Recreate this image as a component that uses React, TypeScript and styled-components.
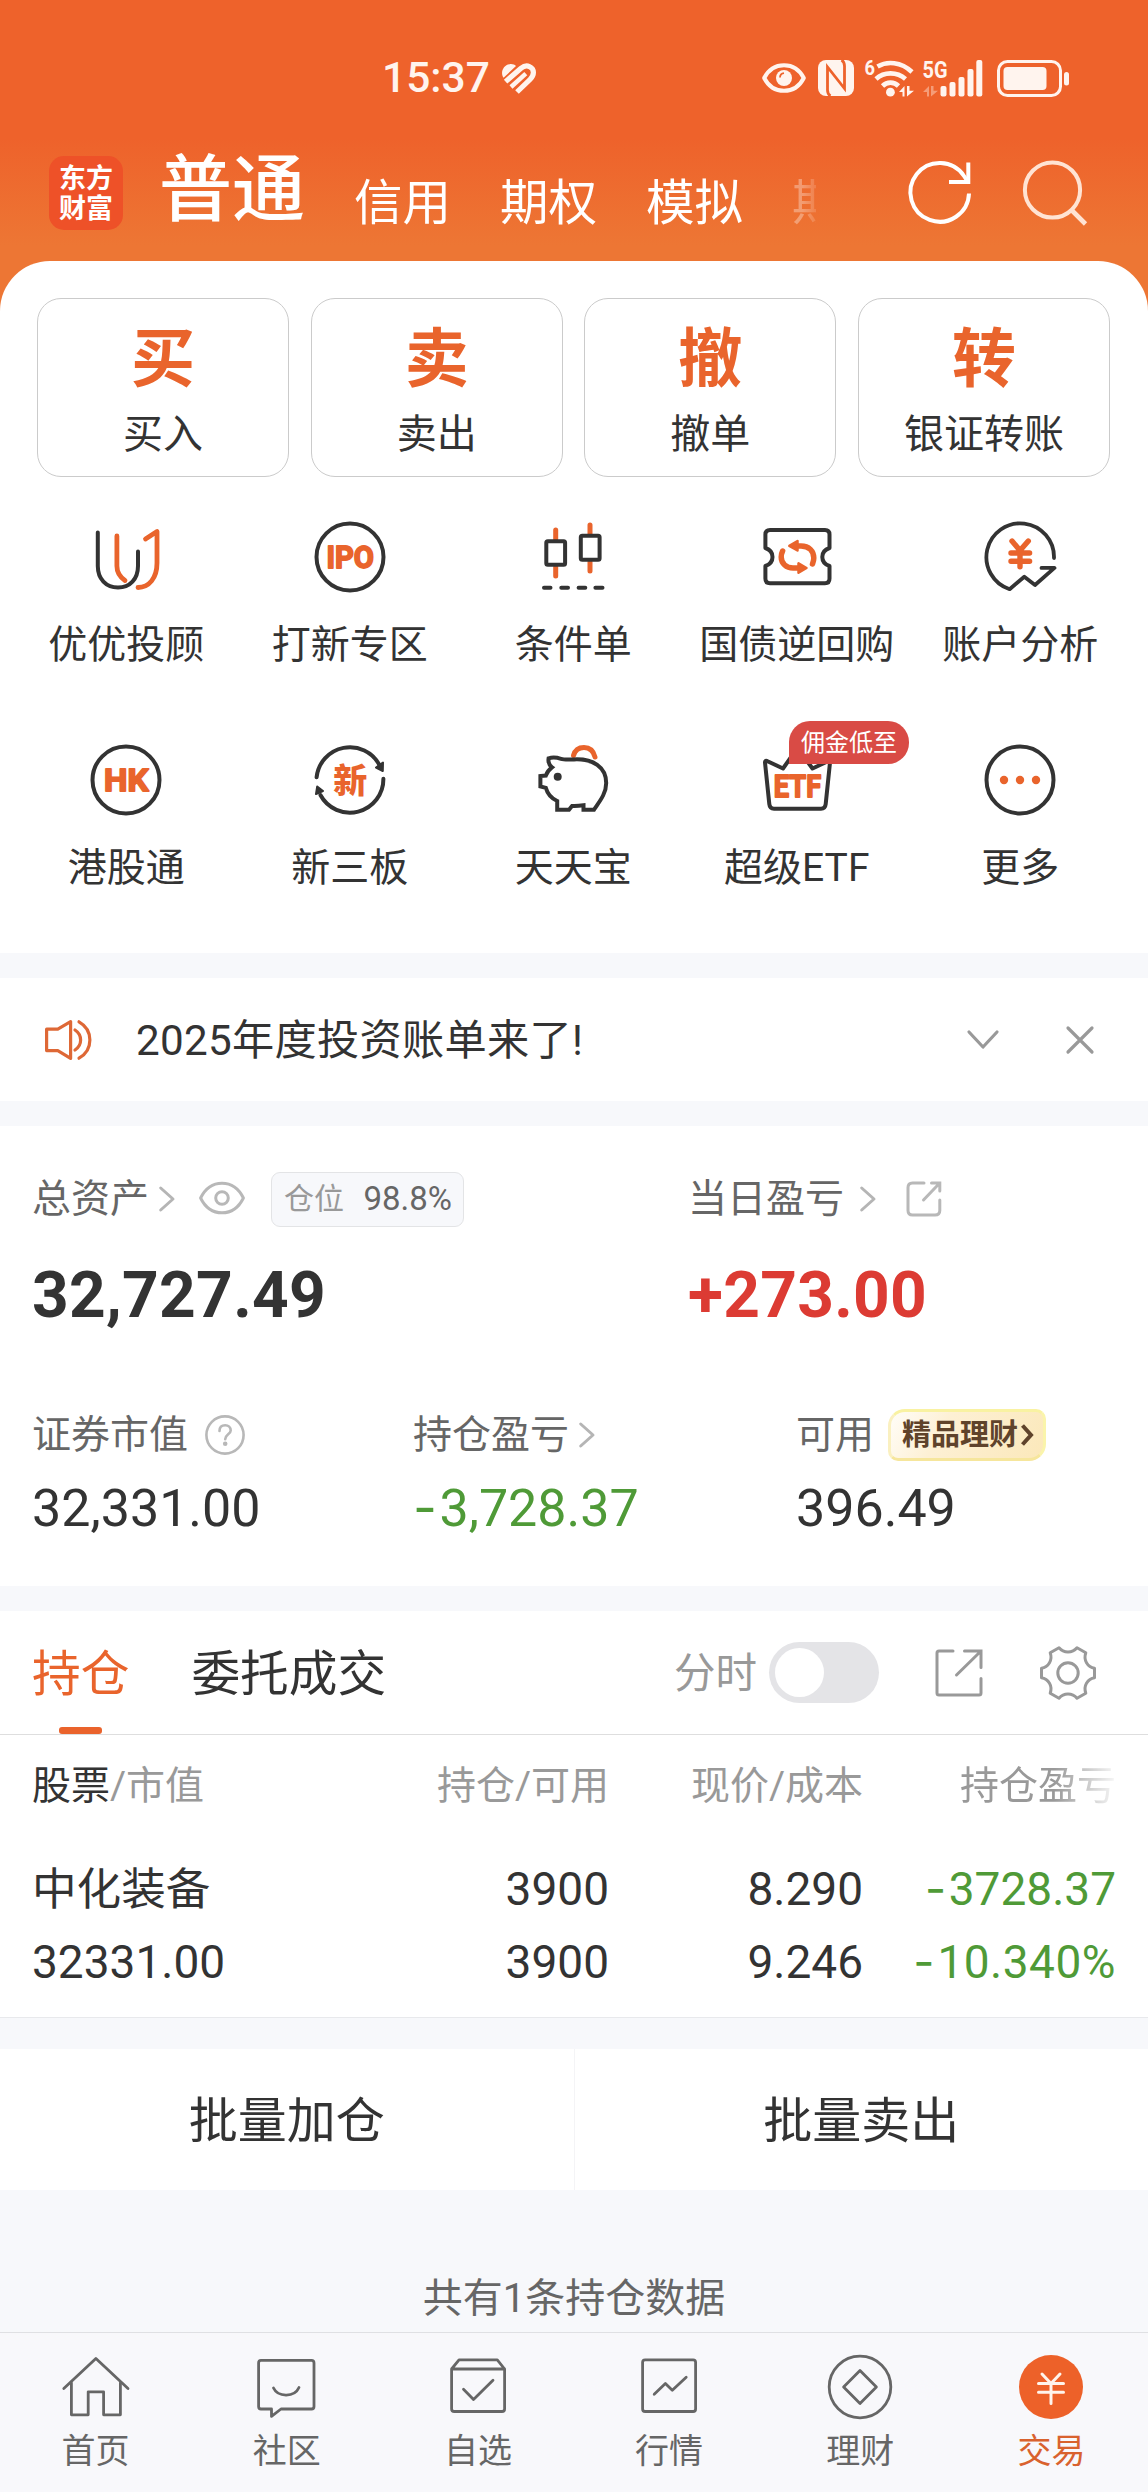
import React from 'react';
import styled, { createGlobalStyle, css } from 'styled-components';

const ORANGE = '#e9642c';
const INK = '#333333';
const GREY = '#666666';
const LIGHT = '#999999';
const GREEN = '#4f9a37';
const RED = '#dc3b33';

const GlobalStyle = createGlobalStyle`
  * { box-sizing: border-box; }
  body {
    margin: 0;
    background: #f7f8fb;
    color: ${INK};
    font-family: Roboto, "Noto Sans CJK SC", sans-serif;
    white-space: nowrap;
  }
  svg { display: block; flex: none; overflow: visible; }
  svg text { font-family: Roboto, "Noto Sans CJK SC", sans-serif; }
`;

const Page = styled.div`
  width: 1148px;
  height: 2492px;
  overflow: hidden;
  display: flex;
  flex-direction: column;
  background: #f7f8fb;
`;

const Top = styled.div`
  background: linear-gradient(180deg, #ee622b 0, #ee622b 138px, #ed7634 245px, #ed7634 100%);
`;

/* ---------- status bar ---------- */

const StatusBar = styled.div`
  height: 156px;
  display: flex;
  align-items: center;
  padding: 0 79px 0 382px;
  color: #fff4ee;
`;

const Clock = styled.span`
  font-size: 42.5px;
  font-weight: 500;
  line-height: 50px;
  width: 119px;
`;

const StatusIcons = styled.div`
  margin-left: auto;
  display: flex;
  align-items: center;
`;

const StatusIcon = styled.span<{ $gap: number }>`
  margin-left: ${p => p.$gap}px;
`;

/* ---------- header ---------- */

const Header = styled.div`
  height: 105px;
  display: flex;
  align-items: flex-start;
  padding-left: 49px;
`;

const HeaderInner = styled.div`
  height: 73px;
  flex: 1;
  display: flex;
  align-items: center;
`;

const Logo = styled.div`
  width: 74px;
  height: 74px;
  border-radius: 15px;
  background: #ee5128;
  color: #fff;
  font-size: 27px;
  font-weight: 700;
  line-height: 30px;
  text-align: center;
  padding-top: 8px;
`;

const Tabs = styled.div`
  display: flex;
  align-items: center;
  margin-left: 36px;
`;

const MainTab = styled.span`
  font-size: 73px;
  line-height: 76px;
  padding-bottom: 6px;
  font-weight: 500;
  color: #fff;
`;

const SubTab = styled.span<{ $faded?: boolean }>`
  font-size: 48.5px;
  line-height: 60px;
  color: #fff;
  padding-top: 22px;
  margin-left: 49px;
  ${p => p.$faded && css`
    margin-right: -24px;
    opacity: .32;
    mask-image: linear-gradient(90deg, #000 10px, rgba(0, 0, 0, .4) 24px, transparent 24px);
  `}
`;

const HeaderAction = styled.div<{ $left: number }>`
  margin-left: ${p => p.$left}px;
`;

/* ---------- sheet ---------- */

const Sheet = styled.div`
  background: #fff;
  border-radius: 50px 50px 0 0;
  padding: 37px 37px 60px;
`;

const Cards = styled.div`
  display: grid;
  grid-template-columns: repeat(4, 1fr);
  gap: 21.6px;
  padding-right: 1px;
`;

const Card = styled.div`
  height: 179px;
  border: 1px solid #cbcbcb;
  border-radius: 24px;
  display: flex;
  flex-direction: column;
  align-items: center;
  padding-top: 26px;
`;

const CardGlyph = styled.span`
  font-size: 64px;
  line-height: 70px;
  font-weight: 700;
  color: ${ORANGE};
`;

const CardLabel = styled.span`
  font-size: 40px;
  line-height: 50px;
  margin-top: 15px;
`;

const Tools = styled.div`
  display: grid;
  grid-template-columns: repeat(5, 1fr);
  row-gap: 70px;
  margin: 40px -21px 0 -22.5px;
`;

const Tool = styled.div`
  position: relative;
  display: flex;
  flex-direction: column;
  align-items: center;
`;

const ToolLabel = styled.span`
  font-size: 39px;
  line-height: 50px;
  margin-top: 23px;
`;

const Ribbon = styled.span`
  position: absolute;
  left: 104px;
  top: -19px;
  width: 120px;
  height: 43px;
  border-radius: 21px 21px 21px 0;
  background: #d94b45;
  color: #fff;
  font-size: 24px;
  line-height: 45px;
  text-align: center;
`;

/* ---------- notice ---------- */

const Notice = styled.div`
  height: 123px;
  margin-top: 25px;
  background: #fff;
  display: flex;
  align-items: center;
  padding: 0 53px 0 43px;
`;

const NoticeText = styled.span`
  flex: 1;
  margin-left: 40px;
  padding-top: 3px;
  font-size: 42.2px;
  letter-spacing: .3px;
  line-height: 60px;
`;

const NoticeActions = styled.div`
  display: flex;
  align-items: center;
  gap: 64px;
`;

/* ---------- assets ---------- */

const Assets = styled.div`
  height: 460px;
  margin-top: 25px;
  background: #fff;
  padding: 45px 31px 0 32px;
`;

const TwoCols = styled.div`
  display: grid;
  grid-template-columns: 656px 1fr;
`;

const ThreeCols = styled.div`
  display: grid;
  grid-template-columns: 381px 383px 1fr;
  margin-top: 79px;
`;

const Caption = styled.div`
  height: 56px;
  display: flex;
  align-items: center;
  color: ${GREY};
  font-size: 39px;
  line-height: 56px;
`;

const Spaced = styled.span<{ $left: number }>`
  margin-left: ${p => p.$left}px;
`;

const BigNumber = styled.div<{ $color?: string }>`
  margin-top: 37px;
  font-size: 64px;
  line-height: 64px;
  font-weight: 700;
  letter-spacing: .3px;
  color: ${p => p.$color ?? INK};
`;

const Figure = styled.div<{ $color?: string }>`
  margin-top: 16px;
  font-size: 52px;
  line-height: 60px;
  color: ${p => p.$color ?? INK};
`;

const Dash = styled.span`
  font-family: Inter, Roboto, sans-serif;
  line-height: 1;
  margin-right: 2.5px;
`;

const Ratio = styled.span`
  margin-left: 26px;
  width: 193px;
  height: 55px;
  border: 1px solid #e3e4e6;
  border-radius: 9px;
  background: #f7f8fb;
  display: flex;
  align-items: center;
  justify-content: space-between;
  padding: 0 11px 0 12px;
  font-size: 30px;
  line-height: 50px;
  color: ${LIGHT};
`;

const RatioValue = styled.span`
  font-size: 33px;
  color: ${GREY};
`;

const GoldTag = styled.span`
  margin-left: 14px;
  width: 158px;
  height: 52px;
  border: 3px solid;
  border-color: #f9f2a2 #faf4ab #f6e69c #faf0c0;
  border-radius: 17px 10px 17px 10px;
  background: linear-gradient(120deg, #fffdf8 0, #fdf0d4 35%, #fbe8ba 100%);
  display: flex;
  align-items: center;
  padding: 0 0 0 11px;
  gap: 3px;
  font-size: 29px;
  font-weight: 700;
  line-height: 46px;
  color: #5f432b;
`;

/* ---------- holdings ---------- */

const Holdings = styled.div`
  margin-top: 25px;
  height: 407px;
  background: #fff;
  border-bottom: 1px solid #e8e9ec;
`;

const HoldingTabs = styled.div`
  height: 124px;
  border-bottom: 1px solid #dedede;
  display: flex;
  align-items: stretch;
  padding: 0 52px 0 32px;
`;

const HoldingTab = styled.span<{ $active?: boolean }>`
  position: relative;
  font-size: 48.7px;
  line-height: 127px;
  margin-right: 62px;
  color: ${p => (p.$active ? ORANGE : INK)};
  ${p => p.$active && css`
    &::after {
      content: '';
      position: absolute;
      left: 27px;
      bottom: 0;
      width: 43px;
      height: 7px;
      border-radius: 3px;
      background: #ea632c;
    }
  `}
`;

const HoldingTools = styled.div`
  margin-left: auto;
  display: flex;
  align-items: center;
  color: ${LIGHT};
`;

const SwitchLabel = styled.span`
  font-size: 41.5px;
  line-height: 60px;
  padding-top: 3px;
`;

const Switch = styled.span`
  width: 110px;
  height: 61px;
  margin: 0 56px 0 12px;
  border-radius: 31px;
  background: #e4e4e7;
  padding: 6px;
  &::after {
    content: '';
    display: block;
    width: 49px;
    height: 49px;
    border-radius: 50%;
    background: #fff;
  }
`;

const TableRow = styled.div<{ $head?: boolean }>`
  display: grid;
  grid-template-columns: 577px 254px 253px;
  padding-left: 32px;
  font-size: ${p => (p.$head ? 39 : 46)}px;
  line-height: ${p => (p.$head ? 103 : 73)}px;
  height: ${p => (p.$head ? 103 : 73)}px;
  margin-bottom: ${p => (p.$head ? 15 : 0)}px;
  color: ${p => (p.$head ? LIGHT : INK)};
`;

const FirstCell = styled.div`
  display: flex;
  justify-content: space-between;
`;

const RightCell = styled.span<{ $color?: string; $fade?: boolean; $spacing?: number }>`
  display: block;
  text-align: right;
  letter-spacing: ${p => p.$spacing ?? 0}px;
  color: ${p => p.$color ?? 'inherit'};
  ${p => p.$fade && css`
    mask-image: linear-gradient(90deg, #000 0, #000 calc(100% - 62px), rgba(0, 0, 0, .08) 100%);
  `}
`;

const Strong = styled.b`
  font-weight: 400;
  color: ${INK};
`;

const StockName = styled.span`
  font-size: 44.6px;
  padding-top: 1px;
`;

/* ---------- actions ---------- */

const Actions = styled.div`
  height: 141px;
  margin-top: 31px;
  background: #fff;
  display: flex;
`;

const Action = styled.div`
  flex: 1;
  text-align: center;
  font-size: 49px;
  line-height: 145px;
  & + & { border-left: 1px solid #f4f4f6; }
`;

const Count = styled.div`
  height: 142px;
  padding-top: 84px;
  font-size: 40px;
  line-height: 50px;
  text-align: center;
  color: ${GREY};
`;

/* ---------- bottom navigation ---------- */

const BottomNav = styled.div`
  flex: 1;
  border-top: 1px solid #dfe0e3;
  background: #f8f8fb;
  display: grid;
  grid-template-columns: repeat(6, 1fr);
  padding: 19px 1px 0 0;
`;

const NavItem = styled.div<{ $active?: boolean }>`
  display: flex;
  flex-direction: column;
  align-items: center;
  gap: 9px;
  font-size: 34px;
  line-height: 40px;
  color: ${p => (p.$active ? '#d9622e' : GREY)};
`;

/* ---------- icons ---------- */

const ToolSvg = ({ children }: { children: React.ReactNode }) => (
  <svg width="80" height="80" viewBox="0 0 80 80" fill="none" stroke={INK} strokeWidth="4" strokeLinecap="round" strokeLinejoin="round">
    {children}
  </svg>
);

const IconText = ({ x, y, w, size, children }: { x: number; y: number; w: number; size: number; children: string }) => (
  <text x={x} y={y} textLength={w} lengthAdjust="spacingAndGlyphs" fontSize={size} fontWeight="700" fill={ORANGE} stroke={ORANGE} strokeWidth="1.8">
    {children}
  </text>
);

const icons = {
  advisor: (
    <ToolSvg>
      <path d="M11.8 15.5V49C11.8 62 20 70.5 32 70.5S52 62 52 49V34.5" />
      <g stroke={ORANGE} strokeWidth="4.8">
        <path d="M30.9 19V49C30.9 55 34 60 39 63.5" />
        <path d="M59.5 22L71 14.5V46C71 61 63 70.5 52 70.5" />
      </g>
    </ToolSvg>
  ),
  ipo: (
    <ToolSvg>
      <circle cx="40" cy="40" r="33.5" />
      <IconText x={16.5} y={51.3} w={47.5} size={32}>IPO</IconText>
    </ToolSvg>
  ),
  candles: (
    <ToolSvg>
      <g stroke={ORANGE} strokeWidth="5">
        <path d="M22.7 13V22M22.7 50V59M57 8V17M57 45V54" />
      </g>
      <rect x="13.3" y="24.3" width="18.8" height="23.4" rx="1.5" />
      <rect x="47.8" y="18.7" width="18.8" height="24" rx="1.5" />
      <path d="M11 70.7H17.5M28.3 70.7H35M45.6 70.7H52.3M62.4 70.7H69.5" />
    </ToolSvg>
  ),
  bond: (
    <ToolSvg>
      <path d="M13 13H68Q72.5 13 72.5 17.5V31C68 32.5 65.3 36 65.3 40S68 47.5 72.5 49V61.5Q72.5 66.3 68 66.3H13Q8.4 66.3 8.4 61.5V49C12.9 47.5 15.5 44 15.5 40S12.9 32.5 8.4 31V17.5Q8.4 13 13 13Z" />
      <g stroke={ORANGE} strokeWidth="5.5">
        <path d="M40 29H44C52 29 56.8 34 56.8 41C56.8 43.5 56.3 45 55.5 47" />
        <path d="M25.6 34C24.6 36 24.2 38 24.2 40C24.2 46.5 29.5 51 36 51H42" />
      </g>
      <path d="M32.3 28.8L40.5 24V33.5ZM49.5 51L41.5 46.3V55.8Z" fill={ORANGE} stroke={ORANGE} strokeWidth="2.5" />
    </ToolSvg>
  ),
  account: (
    <ToolSvg>
      <path d="M74 41A33.8 33.8 0 1 0 29.6 72.2L44.3 59.7L55 68L74.5 50.9H61.5" strokeWidth="3.8" />
      <path d="M32 24L40 33.5L48.3 24M40 34V49.7M31 36H49.6M31 44.3H49.6" stroke={ORANGE} strokeWidth="5.4" />
    </ToolSvg>
  ),
  hk: (
    <ToolSvg>
      <circle cx="40" cy="40" r="33.5" />
      <IconText x={18} y={51.3} w={44.5} size={32}>HK</IconText>
    </ToolSvg>
  ),
  neeq: (
    <ToolSvg>
      <path d="M6.6 37.3A33.5 33.5 0 0 1 69.5 25" />
      <path d="M73.4 38.8A33.5 33.5 0 0 1 10.4 55" />
      <path d="M72.8 31L66 27.5L73 22.5ZM7.2 46.5L13 51L6 54Z" fill={INK} strokeWidth="2" />
      <text x="23.3" y="52.6" fontSize="34" fontWeight="900" fill={ORANGE} stroke="none">新</text>
    </ToolSvg>
  ),
  piggy: (
    <ToolSvg>
      <path d="M40.5 15.5C42 10 46 7.5 51 7.5C57 7.5 60.5 11 62 17" stroke={ORANGE} strokeWidth="5" />
      <path d="M15.6 18.3C19 17.2 24 17.5 28 18.8C31 19.8 35 19.4 41 19.4C60 18.5 73.2 27 73.2 43C73.2 54 66 62 61 69.7H50.5V65.3C46 66 42 66.2 39 66L36 69.7H24.2V61C18.5 58.5 14.5 54 12.8 47.8L7.4 46.5V36L12.8 35.6C14 32 16 29.5 19 27.3C16 25 15 22 15.6 18.3Z" strokeLinejoin="miter" />
      <circle cx="24.7" cy="36.7" r="4" fill={INK} stroke="none" />
    </ToolSvg>
  ),
  etf: (
    <ToolSvg>
      <path d="M8 22.5L12.3 64Q12.8 68.7 17 68.7H64Q68.2 68.7 68.7 64L73 22.5Q73 20.5 71 21.3L55.5 28.5L40.5 8L26 28.5L10 21Q7.8 20.3 8 22.5Z" />
      <IconText x={16.8} y={57.3} w={47.3} size={32}>ETF</IconText>
    </ToolSvg>
  ),
  more: (
    <ToolSvg>
      <circle cx="40" cy="40" r="33.5" />
      <g fill={ORANGE} stroke="none">
        <circle cx="24" cy="40" r="4.2" />
        <circle cx="40" cy="40" r="4.2" />
        <circle cx="56" cy="40" r="4.2" />
      </g>
    </ToolSvg>
  ),
};

const NavSvg = ({ children }: { children: React.ReactNode }) => (
  <svg width="70" height="70" viewBox="0 0 70 70" fill="none" stroke={GREY} strokeWidth="2.8" strokeLinecap="round" strokeLinejoin="round">
    {children}
  </svg>
);

const navIcons = {
  home: (
    <NavSvg>
      <path d="M2.8 36.5L34.9 6.5L67 36.5" />
      <path d="M10.4 31V62.8H27.2V39.8H42.6V62.8H59.4V31" />
    </NavSvg>
  ),
  community: (
    <NavSvg>
      <path d="M9 8.4H59.5Q62 8.4 62 11V54.5Q62 57 59.5 57H29L19.5 64.3V57H9Q6.6 57 6.6 54.5V11Q6.6 8.4 9 8.4Z" />
      <path d="M21.5 36C26 45.5 42.5 45.5 47 35.5" />
    </NavSvg>
  ),
  watch: (
    <NavSvg>
      <path d="M8.6 17L16 7.8H54.3L61.6 17V57Q61.6 59.5 59 59.5H11.2Q8.6 59.5 8.6 57ZM8.6 17H61.6M20.5 37.3L30.5 47.4L50 28.2" />
    </NavSvg>
  ),
  market: (
    <NavSvg>
      <rect x="8.6" y="7.8" width="53" height="51.7" rx="2.5" />
      <path d="M20.2 42.3L31.4 31.5L38.3 38.3L52.2 25.2" />
    </NavSvg>
  ),
  wealth: (
    <NavSvg>
      <circle cx="35" cy="35" r="30.8" />
      <path d="M35 18.5L51.4 35L35 51.5L18.6 35Z" />
    </NavSvg>
  ),
  trade: (
    <NavSvg>
      <circle cx="35" cy="35" r="32" fill="#ed6129" stroke="none" />
      <path d="M26 22L35 31.5L44 22M35 31.5V51.5M22.5 31.5H47.5M22.5 40.3H47.5" stroke="#fff4ec" strokeWidth="3" />
    </NavSvg>
  ),
};

const Chevron = ({ color = '#b5b5b5', weight = 3 }: { color?: string; weight?: number }) => (
  <svg width="16" height="26" viewBox="0 0 16 26" fill="none" stroke={color} strokeWidth={weight} strokeLinecap="round" strokeLinejoin="round">
    <path d="M1.7 2L14 13L1.7 24" />
  </svg>
);

const EyeIcon = () => (
  <svg width="46" height="34" viewBox="0 0 46 34" fill="none" stroke="#b8b8b8" strokeWidth="3">
    <path d="M1.6 16C6 7 13.5 1.2 23 1.2S40 7 44.4 16C40 25 32.5 30.8 23 30.8S6 25 1.6 16Z" strokeLinejoin="round" />
    <circle cx="23" cy="16" r="6.3" />
  </svg>
);

const ShareSmall = () => (
  <svg width="36" height="36" viewBox="0 0 36 36" fill="none" stroke="#b8b8b8" strokeWidth="3" strokeLinecap="round">
    <path d="M18 2H6.5Q2 2 2 6.5V29.5Q2 34 6.5 34H29Q33.8 34 33.8 29.5V19M25.5 2H33.8V10M33.5 2.3L17.5 19" />
  </svg>
);

const ShareLarge = () => (
  <svg width="48" height="48" viewBox="0 0 48 48" fill="none" stroke="#999" strokeWidth="3" strokeLinecap="round">
    <path d="M18 2H4Q2 2 2 4V44Q2 46 4 46H44Q46 46 46 44V29.5M29.5 2H46V18.5M45.5 2.5L21.5 26" />
  </svg>
);

const Help = () => (
  <svg width="40" height="40" viewBox="0 0 40 40" fill="none" stroke="#b8b8b8" strokeWidth="2.6" strokeLinecap="round">
    <circle cx="20" cy="20" r="18.6" />
    <path d="M14.5 16C14.5 12.2 17 10.3 20.2 10.3S25.7 12.4 25.7 15.4C25.7 19.3 20.2 19.5 20.2 24.3" />
    <circle cx="20.2" cy="28.8" r="1" fill="#b8b8b8" />
  </svg>
);

const Gear = () => (
  <svg width="56" height="54" viewBox="0 0 56 54" fill="none" stroke="#999" strokeWidth="3" strokeLinejoin="round">
    <path d="M19 1.8C21.5 4.8 24.5 6 28 6S34.5 4.8 37 1.8L45.8 6.8C44.4 10.8 44.8 13.8 46.5 16.7S51 21.8 54.5 22.3V31.7C51 32.2 48.2 34.4 46.5 37.3S44.4 43.2 45.8 47.2L37 52.2C34.5 49.2 31.5 48 28 48S21.5 49.2 19 52.2L10.2 47.2C11.6 43.2 11.2 40.2 9.5 37.3S5 32.2 1.5 31.7V22.3C5 21.8 7.8 19.6 9.5 16.7S11.6 10.8 10.2 6.8Z" />
    <circle cx="28" cy="27" r="10.2" />
  </svg>
);

const HeartIcon = () => (
  <svg width="35" height="31" viewBox="0 0 35 31" fill="none" stroke="#fff4ee" strokeWidth="5.2">
    <path d="M2.6 14.8C-1 10 2 2 8.5 1.2C11.5 .8 13.3 1.6 15 3Z" fill="#fff4ee" stroke="none" />
    <path d="M4.6 18.6L20 5.2C26 .6 32.4 4 32.4 9.5C32.4 12.5 31 14.5 29 16.5L16 29" />
    <path d="M10 24L24.8 10.6" strokeWidth="4.4" />
  </svg>
);

const StatusEye = () => (
  <svg width="44" height="30" viewBox="0 0 44 30" fill="none" stroke="#fff4ee" strokeWidth="4">
    <path d="M2.2 15C6.5 6.5 13.5 2.2 22 2.2S37.5 6.5 41.8 15C37.5 23.5 30.5 27.8 22 27.8S6.5 23.5 2.2 15Z" strokeLinejoin="round" />
    <circle cx="22" cy="15" r="8" fill="#fff4ee" stroke="none" />
    <path d="M18 14.5A4.5 4.5 0 0 1 22 10.2" stroke="#ee622b" strokeWidth="1.8" />
  </svg>
);

const Nfc = () => (
  <svg width="36" height="36" viewBox="0 0 36 36">
    <rect width="36" height="36" rx="8" fill="#fff4ee" />
    <path d="M12.5 36C10 34.5 9.5 32.5 9.5 30V7L26.5 28.5V6C26.5 3.5 26 1.5 23.5 0" fill="none" stroke="#ee622b" strokeWidth="2.8" />
  </svg>
);

const Wifi = () => (
  <svg width="50" height="37" viewBox="0 0 50 37" fill="none" stroke="#fff4ee" strokeWidth="4.6">
    <text x="-.5" y="15" fontSize="20" fontWeight="700" fill="#fff4ee" stroke="none" textLength="10.5" lengthAdjust="spacingAndGlyphs">6</text>
    <path d="M12.5 6.5C22 1 36 1.5 47 12" />
    <path d="M11 19C19 11.5 32 11.5 40.5 19" />
    <path d="M17.5 26C22 21.5 29 21.5 33.5 26" />
    <circle cx="25.4" cy="32.2" r="4.4" fill="#fff4ee" stroke="none" />
    <path d="M34 32L39.5 26V36.5H37.5V32ZM42 26V36.5L49 30.8H44.5V26Z" fill="#fff4ee" stroke="none" />
  </svg>
);

const Signal = () => (
  <svg width="60" height="37" viewBox="0 0 60 37" fill="#fff4ee">
    <text x="-.5" y="18" fontSize="24" fontWeight="700" textLength="25" lengthAdjust="spacingAndGlyphs">5G</text>
    <path d="M0 32L6 26V36.5H4V32ZM8 26V36.5L15 30.8H10.5V26Z" opacity=".4" />
    <rect x="17.5" y="26" width="6" height="10.5" rx="2" />
    <rect x="26.5" y="22" width="6" height="14.5" rx="2" />
    <rect x="35.5" y="17" width="6" height="19.5" rx="2" />
    <rect x="44.5" y="9" width="6" height="27.5" rx="2" />
    <rect x="53.3" y="0" width="6" height="36.5" rx="2" />
  </svg>
);

const Battery = () => (
  <svg width="72" height="37" viewBox="0 0 72 37">
    <rect x="1.5" y="1.5" width="62" height="34" rx="9" fill="none" stroke="#fff4ee" strokeWidth="3" />
    <rect x="6.5" y="7" width="43" height="23" rx="4" fill="#fff4ee" />
    <rect x="67" y="12" width="5" height="13.5" rx="2.5" fill="#fff4ee" />
  </svg>
);

const Refresh = () => (
  <svg width="64" height="64" viewBox="0 0 64 64" fill="none" stroke="#fff" strokeWidth="4">
    <path d="M61 32.5A29.3 29.3 0 1 1 56 15L60 21" />
    <path d="M60.3 1.5V21H41" />
  </svg>
);

const SearchIcon = () => (
  <svg width="65" height="66" viewBox="0 0 65 66" fill="none" stroke="#ffe3d3" strokeWidth="4">
    <circle cx="29.5" cy="30" r="27.6" />
    <path d="M48.5 50L62.5 64" strokeWidth="4.6" />
  </svg>
);

const Speaker = () => (
  <svg width="53" height="44" viewBox="0 0 53 44" fill="none" stroke="#de6836" strokeWidth="3.2" strokeLinecap="round">
    <path d="M3.6 11.2H14.8L27.6 3.6V40.4L14.8 32.6H3.6Z" strokeLinejoin="round" />
    <path d="M32 12C39.5 17 39.5 27 32 32M36 3.8C50.5 12 50.5 32 36 40.2" />
  </svg>
);

const signed = (value: string) =>
  value.startsWith('-') ? <><Dash>-</Dash>{value.slice(1)}</> : value;

/* ---------- data ---------- */

const cards = [
  ['买', '买入'],
  ['卖', '卖出'],
  ['撤', '撤单'],
  ['转', '银证转账'],
];

const tools: { icon: keyof typeof icons; label: string; ribbon?: string }[] = [
  { icon: 'advisor', label: '优优投顾' },
  { icon: 'ipo', label: '打新专区' },
  { icon: 'candles', label: '条件单' },
  { icon: 'bond', label: '国债逆回购' },
  { icon: 'account', label: '账户分析' },
  { icon: 'hk', label: '港股通' },
  { icon: 'neeq', label: '新三板' },
  { icon: 'piggy', label: '天天宝' },
  { icon: 'etf', label: '超级ETF', ribbon: '佣金低至' },
  { icon: 'more', label: '更多' },
];

const navItems: { icon: keyof typeof navIcons; label: string }[] = [
  { icon: 'home', label: '首页' },
  { icon: 'community', label: '社区' },
  { icon: 'watch', label: '自选' },
  { icon: 'market', label: '行情' },
  { icon: 'wealth', label: '理财' },
  { icon: 'trade', label: '交易' },
];

export default function App() {
  return (
    <Page>
      <GlobalStyle />
      <Top>
        <StatusBar>
          <Clock>15:37</Clock>
          <HeartIcon />
          <StatusIcons>
            <StatusEye />
            <StatusIcon $gap={12}><Nfc /></StatusIcon>
            <StatusIcon $gap={11}><Wifi /></StatusIcon>
            <StatusIcon $gap={8}><Signal /></StatusIcon>
            <StatusIcon $gap={14}><Battery /></StatusIcon>
          </StatusIcons>
        </StatusBar>
        <Header>
          <HeaderInner>
            <Logo>东方<br />财富</Logo>
            <Tabs>
              <MainTab>普通</MainTab>
              <SubTab>信用</SubTab>
              <SubTab>期权</SubTab>
              <SubTab>模拟</SubTab>
              <SubTab $faded>期</SubTab>
            </Tabs>
            <HeaderAction $left={91}><Refresh /></HeaderAction>
            <HeaderAction $left={51}><SearchIcon /></HeaderAction>
          </HeaderInner>
        </Header>
        <Sheet>
          <Cards>
            {cards.map(([glyph, label]) => (
              <Card key={label}>
                <CardGlyph>{glyph}</CardGlyph>
                <CardLabel>{label}</CardLabel>
              </Card>
            ))}
          </Cards>
          <Tools>
            {tools.map(t => (
              <Tool key={t.label}>
                {icons[t.icon]}
                <ToolLabel>{t.label}</ToolLabel>
                {t.ribbon && <Ribbon>{t.ribbon}</Ribbon>}
              </Tool>
            ))}
          </Tools>
        </Sheet>
      </Top>

      <Notice>
        <Speaker />
        <NoticeText>2025年度投资账单来了!</NoticeText>
        <NoticeActions>
          <svg width="36" height="20" viewBox="0 0 36 20" fill="none" stroke="#999" strokeWidth="3.2" strokeLinecap="round" strokeLinejoin="round">
            <path d="M4 2L18 17L32 2" />
          </svg>
          <svg width="30" height="30" viewBox="0 0 30 30" fill="none" stroke="#999" strokeWidth="3.2" strokeLinecap="round">
            <path d="M3 3L27 27M27 3L3 27" />
          </svg>
        </NoticeActions>
      </Notice>

      <Assets>
        <TwoCols>
          <div>
            <Caption>
              总资产
              <Spaced $left={10}><Chevron /></Spaced>
              <Spaced $left={24}><EyeIcon /></Spaced>
              <Ratio>仓位<RatioValue>98.8%</RatioValue></Ratio>
            </Caption>
            <BigNumber>32,727.49</BigNumber>
          </div>
          <div>
            <Caption>
              当日盈亏
              <Spaced $left={16}><Chevron /></Spaced>
              <Spaced $left={30}><ShareSmall /></Spaced>
            </Caption>
            <BigNumber $color={RED}>+273.00</BigNumber>
          </div>
        </TwoCols>
        <ThreeCols>
          <div>
            <Caption>证券市值<Spaced $left={17}><Help /></Spaced></Caption>
            <Figure>32,331.00</Figure>
          </div>
          <div>
            <Caption>持仓盈亏<Spaced $left={10}><Chevron /></Spaced></Caption>
            <Figure $color={GREEN}>{signed('-3,728.37')}</Figure>
          </div>
          <div>
            <Caption>
              可用
              <GoldTag>
                精品理财
                <svg width="13" height="22" viewBox="0 0 13 22" fill="none" stroke="#5f432b" strokeWidth="4">
                  <path d="M1.5 1.5L10 11L1.5 20.5" />
                </svg>
              </GoldTag>
            </Caption>
            <Figure>396.49</Figure>
          </div>
        </ThreeCols>
      </Assets>

      <Holdings>
        <HoldingTabs>
          <HoldingTab $active>持仓</HoldingTab>
          <HoldingTab>委托成交</HoldingTab>
          <HoldingTools>
            <SwitchLabel>分时</SwitchLabel>
            <Switch />
            <ShareLarge />
            <Spaced $left={57}><Gear /></Spaced>
          </HoldingTools>
        </HoldingTabs>
        <TableRow $head>
          <FirstCell>
            <span><Strong>股票</Strong>/市值</span>
            <span>持仓/可用</span>
          </FirstCell>
          <RightCell>现价/成本</RightCell>
          <RightCell $fade>持仓盈亏</RightCell>
        </TableRow>
        <TableRow>
          <FirstCell><StockName>中化装备</StockName><span>3900</span></FirstCell>
          <RightCell>8.290</RightCell>
          <RightCell $color={GREEN}>{signed('-3728.37')}</RightCell>
        </TableRow>
        <TableRow>
          <FirstCell><span>32331.00</span><span>3900</span></FirstCell>
          <RightCell>9.246</RightCell>
          <RightCell $color={GREEN} $spacing={0.5}>{signed('-10.340%')}</RightCell>
        </TableRow>
      </Holdings>

      <Actions>
        <Action>批量加仓</Action>
        <Action>批量卖出</Action>
      </Actions>
      <Count>共有1条持仓数据</Count>

      <BottomNav>
        {navItems.map(n => (
          <NavItem key={n.label} $active={n.icon === 'trade'}>
            {navIcons[n.icon]}
            {n.label}
          </NavItem>
        ))}
      </BottomNav>
    </Page>
  );
}
